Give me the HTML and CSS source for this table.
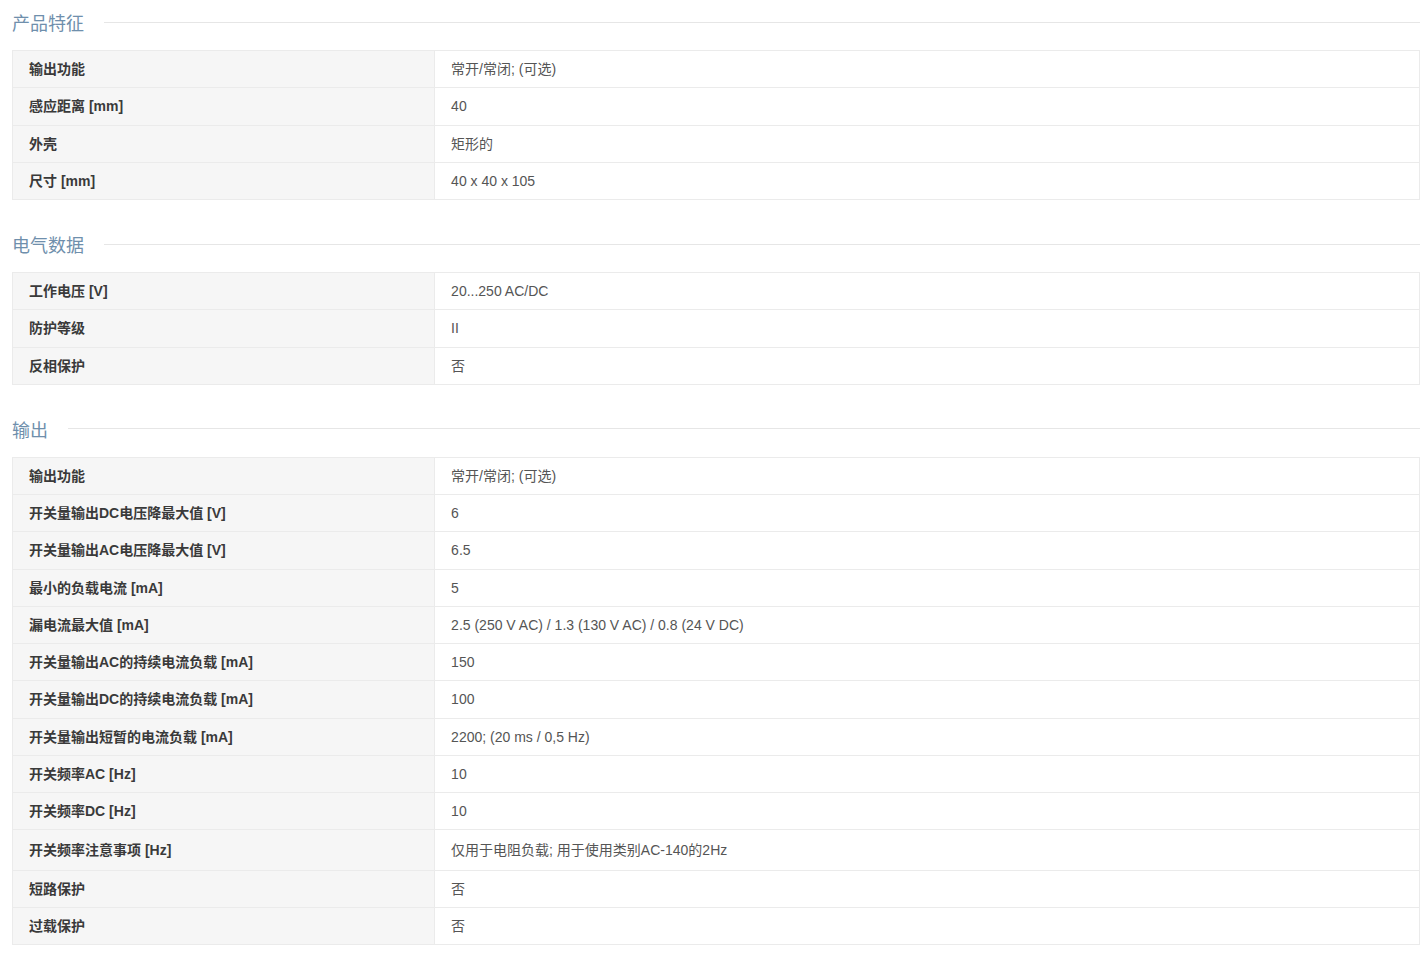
FILE: index.html
```html
<!DOCTYPE html>
<html lang="zh-CN">
<head>
  <meta charset="UTF-8">
  <meta name="viewport" content="width=device-width, initial-scale=1.0">
  <title>产品参数</title>
  <link rel="stylesheet" href="styles.css">
</head>
<body>
  <section class="spec-group">
    <h2 class="spec-title"><span>产品特征</span></h2>
    <table class="spec-table">
      <tr><th>输出功能</th><td>常开/常闭; (可选)</td></tr>
      <tr><th>感应距离 [mm]</th><td>40</td></tr>
      <tr><th>外壳</th><td>矩形的</td></tr>
      <tr><th>尺寸 [mm]</th><td>40 x 40 x 105</td></tr>
    </table>
  </section>

  <section class="spec-group">
    <h2 class="spec-title"><span>电气数据</span></h2>
    <table class="spec-table">
      <tr><th>工作电压 [V]</th><td>20...250 AC/DC</td></tr>
      <tr><th>防护等级</th><td>II</td></tr>
      <tr><th>反相保护</th><td>否</td></tr>
    </table>
  </section>

  <section class="spec-group">
    <h2 class="spec-title"><span>输出</span></h2>
    <table class="spec-table">
      <tr><th>输出功能</th><td>常开/常闭; (可选)</td></tr>
      <tr><th>开关量输出DC电压降最大值 [V]</th><td>6</td></tr>
      <tr><th>开关量输出AC电压降最大值 [V]</th><td>6.5</td></tr>
      <tr><th>最小的负载电流 [mA]</th><td>5</td></tr>
      <tr><th>漏电流最大值 [mA]</th><td>2.5 (250 V AC) / 1.3 (130 V AC) / 0.8 (24 V DC)</td></tr>
      <tr><th>开关量输出AC的持续电流负载 [mA]</th><td>150</td></tr>
      <tr><th>开关量输出DC的持续电流负载 [mA]</th><td>100</td></tr>
      <tr><th>开关量输出短暂的电流负载 [mA]</th><td>2200; (20 ms / 0,5 Hz)</td></tr>
      <tr><th>开关频率AC [Hz]</th><td>10</td></tr>
      <tr><th>开关频率DC [Hz]</th><td>10</td></tr>
      <tr class="row-tall"><th>开关频率注意事项 [Hz]</th><td>仅用于电阻负载; 用于使用类别AC-140的2Hz</td></tr>
      <tr><th>短路保护</th><td>否</td></tr>
      <tr><th>过载保护</th><td>否</td></tr>
    </table>
  </section>
</body>
</html>
```

FILE: styles.css
```css
body {
  margin: 0;
  padding: 10px 8px 0 12px;
  font-family: "Liberation Sans", Arial, "Noto Sans CJK SC", sans-serif;
  font-size: 14px;
  color: #555;
  background: #fff;
}
.spec-group {
  margin-bottom: 32px;
}
.spec-title {
  display: flex;
  align-items: center;
  margin: 0 0 16px;
  height: 24px;
  font-size: 18px;
  font-weight: normal;
  color: #6f8fac;
}
.spec-title::after {
  content: "";
  flex: 1;
  height: 1px;
  margin-left: 20px;
  background: #e6e6e6;
}
.spec-table {
  width: 100%;
  border-collapse: collapse;
  table-layout: fixed;
}
.spec-table th,
.spec-table td {
  padding: 9px 16px;
  line-height: 18.25px;
  border: 1px solid #ebebeb;
  text-align: left;
  vertical-align: middle;
}
.spec-table th {
  box-sizing: border-box;
  width: 30%;
  background: #f6f6f6;
  color: #3a3a3a;
  font-weight: bold;
}
.spec-table td {
  color: #555;
}
.row-tall th,
.row-tall td {
  padding-top: 10.5px;
  padding-bottom: 10.5px;
}
```
